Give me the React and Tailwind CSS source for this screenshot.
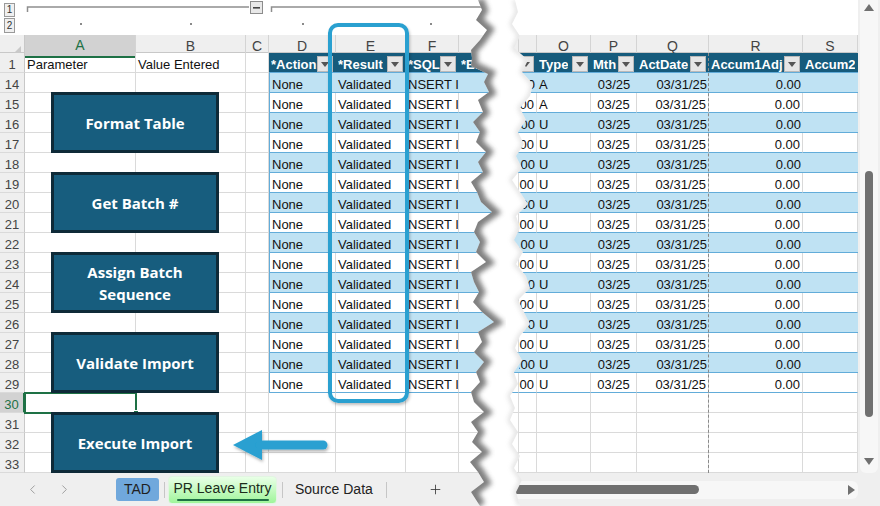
import React from 'react';
import { ChevronLeft, ChevronRight, Plus } from 'lucide-react';

const GRID =
  'grid grid-cols-[25px_111px_110px_23px_67px_70px_53px_60px_18px_54px_46px_72px_94px_55px]';

const letters = ['A', 'B', 'C', 'D', 'E', 'F', '', '', 'O', 'P', 'Q', 'R', 'S'];

const leftEdge = [
  [0, 478], [10, 482], [20, 476], [30, 487], [40, 480], [50, 471], [58, 472], [66, 471], [74, 488],
  [82, 484], [92, 489], [100, 478], [112, 483], [122, 473], [132, 480], [142, 476], [152, 486],
  [162, 478], [172, 483], [182, 471], [192, 477], [202, 481], [212, 492], [222, 478], [232, 474],
  [242, 480], [252, 476], [262, 486], [272, 471], [282, 474], [292, 479], [302, 473], [312, 482],
  [322, 494], [332, 478], [342, 482], [352, 474], [362, 484], [372, 476], [382, 480], [392, 471],
  [402, 474], [412, 484], [422, 471], [432, 478], [442, 472], [452, 482], [462, 470], [472, 478],
  [482, 484], [492, 471], [506, 480],
];

const rightEdge = [
  [0, 515], [12, 518], [24, 512], [36, 520], [48, 514], [60, 528], [72, 522], [84, 533], [96, 530],
  [108, 520], [120, 526], [132, 518], [144, 524], [156, 516], [168, 522], [180, 512], [192, 520],
  [204, 528], [216, 516], [228, 520], [240, 514], [252, 523], [264, 516], [276, 526], [288, 530],
  [300, 518], [312, 524], [324, 530], [336, 520], [348, 515], [360, 522], [372, 514], [384, 518],
  [396, 510], [408, 515], [420, 510], [432, 518], [444, 512], [456, 520], [468, 514], [480, 522],
  [492, 516], [506, 520],
];

const OFF = 450;

function Tear() {
  const l = leftEdge.map(([y, x]) => `${x - OFF},${y}`);
  const r = [...rightEdge].reverse().map(([y, x]) => `${x - OFF},${y}`);
  const gap = `M${l.join(' L')} L${r.join(' L')} Z`;
  const lineL = `M${l.join(' L')}`;
  const lineR = `M${rightEdge.map(([y, x]) => `${x - OFF},${y}`).join(' L')}`;
  return (
    <svg className="absolute left-[450px] top-0 pointer-events-none" width="100" height="506">
      <defs>
        <clipPath id="gapClip">
          <path d={gap} />
        </clipPath>
        <filter id="blurA" x="-50%" y="-10%" width="200%" height="120%">
          <feGaussianBlur stdDeviation="2.4" />
        </filter>
      </defs>
      <path d={gap} fill="#fff" />
      <g clipPath="url(#gapClip)">
        <path d={lineL} stroke="#6a6a6a" strokeWidth="12" fill="none" filter="url(#blurA)" opacity="0.85" />
        <path d={lineR} stroke="#9a9a9a" strokeWidth="4" fill="none" filter="url(#blurA)" opacity="0.35" />
      </g>
    </svg>
  );
}

function Drop() {
  return (
    <span className="w-[16px] h-[16px] shrink-0 bg-[#e6e6e6] border border-[#b9b9b9] flex items-center justify-center">
      <svg width="8" height="5" viewBox="0 0 8 5">
        <polygon points="0,0 8,0 4,5" fill="#555" />
      </svg>
    </span>
  );
}

function Head({ label, drop = true, end }) {
  return (
    <div
      className={`flex items-end ${end ? 'justify-end' : 'justify-between'} bg-[#165b7c] text-white font-bold text-[13px] leading-[15px] pl-[2px] pr-[3px] overflow-hidden whitespace-nowrap border-b border-[#62acd9]`}
    >
      {label && <span className="overflow-hidden">{label}</span>}
      {drop && <Drop />}
    </div>
  );
}

function RowNum({ n, active }) {
  return (
    <div
      className={`flex items-end justify-center text-[13px] leading-[15px] border-b border-b-[#dadada] ${
        active
          ? 'bg-[#d2d2d2] text-[#1e7145] border-r-2 border-r-[#1e7145]'
          : 'bg-[#efefef] text-[#444] border-r border-r-[#c8c8c8]'
      }`}
    >
      {n}
    </div>
  );
}

function Plain({ children }) {
  return (
    <div className="flex items-end px-[2px] text-[13px] leading-[15px] text-[#111] border-r border-b border-[#dadada] overflow-hidden whitespace-nowrap">
      {children}
    </div>
  );
}

function TCell({ blue, children, align = 'left', first }) {
  const a = align === 'right' ? 'justify-end' : align === 'center' ? 'justify-center' : 'justify-start';
  return (
    <div
      className={`flex items-end ${a} px-[2px] text-[13px] leading-[15px] text-[#111] overflow-hidden whitespace-nowrap border-b border-b-[#62acd9] ${
        blue ? 'bg-[#bfe2f3]' : 'bg-white border-r border-r-[#d9d9d9]'
      } ${first ? 'border-l border-l-[#62acd9]' : ''}`}
    >
      {children}
    </div>
  );
}

const dataRows = Array.from({ length: 16 }, (_, i) => 14 + i);

const buttons = [
  { top: 'top-[92px]', label: ['Format Table'] },
  { top: 'top-[172px]', label: ['Get Batch #'] },
  { top: 'top-[252px]', label: ['Assign Batch', 'Sequence'] },
  { top: 'top-[332px]', label: ['Validate Import'] },
  { top: 'top-[412px]', label: ['Execute Import'] },
];

export default function App() {
  return (
    <div className="relative w-[880px] h-[506px] overflow-hidden bg-white font-['Liberation_Sans',Arial,sans-serif]">
      <div className="flex h-[473px]">
        <div className="w-[858px] flex flex-col">
          {/* outline bar */}
          <div className="flex h-[35px]">
            <div className="w-[25px] flex flex-col gap-[1px] pl-[4px] pt-[3px]">
              <div className="w-[11px] h-[14px] border border-[#9a9a9a] bg-[#f0f0f0] text-[10px] leading-[12px] text-[#333] text-center">1</div>
              <div className="w-[11px] h-[15px] border border-[#9a9a9a] bg-[#f0f0f0] text-[10px] leading-[13px] text-[#333] text-center">2</div>
            </div>
            <svg width="833" height="35">
              <path d="M2.5 12 V7 H224" stroke="#8e8e8e" strokeWidth="1.5" fill="none" />
              <rect x="225.5" y="1.5" width="12" height="12" fill="#e8e8e8" stroke="#8c8c8c" />
              <rect x="228" y="7" width="7" height="1.6" fill="#444" />
              <path d="M246.5 12 V7 H470" stroke="#8e8e8e" strokeWidth="1.5" fill="none" />
              <rect x="55" y="23" width="2" height="2" fill="#8a8a8a" />
              <rect x="165" y="23" width="2" height="2" fill="#8a8a8a" />
              <rect x="277" y="23" width="2" height="2" fill="#8a8a8a" />
              <rect x="405" y="23" width="2" height="2" fill="#8a8a8a" />
            </svg>
          </div>

          {/* column letters */}
          <div className={`${GRID} h-[18px] bg-[#efefef] border-b border-[#c8c8c8]`}>
            <div className="flex items-end justify-end pr-[3px] pb-[3px] border-r border-[#c8c8c8]">
              <svg width="9" height="9">
                <polygon points="9,0 9,9 0,9" fill="#c9c9c9" />
              </svg>
            </div>
            {letters.map((l, i) => (
              <div
                key={i}
                className={`flex items-center justify-center text-[14px] border-r border-r-[#d4d4d4] ${
                  i === 0 ? 'bg-[#d2d2d2] text-[#1e7145] border-b-2 border-b-[#1e7145]' : 'text-[#444]'
                }`}
              >
                {l}
              </div>
            ))}
          </div>

          {/* row 1 */}
          <div className={`${GRID} h-[20px]`}>
            <RowNum n={1} />
            <Plain>Parameter</Plain>
            <Plain>Value Entered</Plain>
            <Plain />
            <Head label="*Action" />
            <Head label="*Result" />
            <Head label="*SQL" />
            <Head label="*EffDate" />
            <Head end />
            <Head label="Type" />
            <Head label="Mth" />
            <Head label="ActDate" />
            <Head label="Accum1Adj" />
            <Head label="Accum2Adj" drop={false} />
          </div>

          {/* table rows */}
          {dataRows.map((r) => {
            const blue = r % 2 === 0;
            return (
              <div key={r} className={`${GRID} h-[20px]`}>
                <RowNum n={r} />
                <Plain />
                <Plain />
                <Plain />
                <TCell blue={blue} first>None</TCell>
                <TCell blue={blue}>Validated</TCell>
                <TCell blue={blue}>NSERT I</TCell>
                <TCell blue={blue} />
                <TCell blue={blue} align="right">.00</TCell>
                <TCell blue={blue}>{r < 16 ? 'A' : 'U'}</TCell>
                <TCell blue={blue} align="center">03/25</TCell>
                <TCell blue={blue} align="right">03/31/25</TCell>
                <TCell blue={blue} align="right">0.00</TCell>
                <TCell blue={blue} />
              </div>
            );
          })}

          {[30, 31, 32, 33].map((r) => (
            <div key={r} className={`${GRID} h-[20px]`}>
              <RowNum n={r} active={r === 30} />
              {Array.from({ length: 13 }, (_, i) => (
                <Plain key={i} />
              ))}
            </div>
          ))}
        </div>

        {/* vertical scrollbar */}
        <div className="w-[22px] h-[473px] bg-[#efefef] pl-[2px] pr-[2px]">
          <div className="h-full rounded-b-[6px] bg-[#f7f7f7] flex flex-col items-center">
            <svg className="mt-[4px]" width="10" height="7" viewBox="0 0 10 7">
              <polygon points="5,0 10,7 0,7" fill="#707070" />
            </svg>
            <div className="mt-[160px] w-[8px] h-[246px] rounded-full bg-[#707070]" />
            <svg className="mt-[41px]" width="10" height="7" viewBox="0 0 10 7">
              <polygon points="0,0 10,0 5,7" fill="#707070" />
            </svg>
          </div>
        </div>
      </div>

      {/* sheet tabs */}
      <div className="flex items-center h-[33px] bg-[#efefef]">
        <ChevronLeft className="ml-[25px]" size={15} color="#9a9a9a" strokeWidth={1.5} />
        <ChevronRight className="ml-[17px]" size={15} color="#9a9a9a" strokeWidth={1.5} />
        <div className="ml-[44px] w-[43px] h-[23px] rounded-[3px] bg-[#70a8dc] text-[14px] text-[#1f1f1f] flex items-center justify-center">
          TAD
        </div>
        <div className="ml-[5px] w-px h-[16px] bg-[#c6c6c6]" />
        <div className="ml-[3px] w-[109px] h-[28px] rounded-[4px] border border-[#e2f5e2] bg-gradient-to-b from-[#e8ffe6] to-[#9ff59a] flex flex-col items-center justify-center">
          <span className="text-[14px] text-[#1b2b1b] font-medium leading-[16px] mt-[2px]">PR Leave Entry</span>
          <span className="mt-[3px] w-[92px] h-[2px] bg-[#1e7145] rounded" />
        </div>
        <div className="ml-[5px] w-px h-[16px] bg-[#c6c6c6]" />
        <span className="ml-[12px] text-[14px] text-[#222]">Source Data</span>
        <div className="ml-[13px] w-px h-[16px] bg-[#c6c6c6]" />
        <Plus className="ml-[41px]" size={15} color="#333" strokeWidth={1.3} />
        <div className="ml-[52px] flex-1 h-[18px] mr-[22px] rounded-[6px] bg-[#f7f7f7] flex items-center">
          <div className="ml-[4px] w-[200px] h-[9px] rounded-full bg-[#707070]" />
          <svg className="ml-auto mr-[3px]" width="7" height="10" viewBox="0 0 7 10">
            <polygon points="0,0 7,5 0,10" fill="#707070" />
          </svg>
        </div>
      </div>

      {/* page break */}
      <div className="absolute left-[708px] top-[53px] h-[420px] border-l border-dashed border-[#8a8a8a]" />

      {/* selected cell A30 */}
      <div className="absolute left-[24px] top-[392px] w-[113px] h-[22px] border-2 border-[#1e7145]">
        <div className="absolute right-[-4px] bottom-[-4px] w-[6px] h-[6px] bg-[#1e7145] border border-white" />
      </div>

      {/* macro buttons */}
      {buttons.map((b) => (
        <div
          key={b.label[0]}
          className={`absolute left-[51px] ${b.top} w-[168px] h-[61px] bg-[#175d7e] border-[3px] border-[#0e2a38] flex flex-col items-center justify-center text-white font-['Open_Sans',sans-serif] font-bold text-[15px] leading-[22px]`}
        >
          {b.label.map((t) => (
            <span key={t}>{t}</span>
          ))}
        </div>
      ))}

      {/* highlight frame */}
      <div className="absolute left-[328px] top-[23px] w-[81px] h-[380px] rounded-[10px] border-4 border-[#2aa0d0] shadow-[1px_2px_3px_rgba(0,0,0,0.25)]" />

      {/* arrow */}
      <svg className="absolute left-[228px] top-[426px]" width="106" height="40">
        <defs>
          <filter id="arrowShadow" x="-20%" y="-30%" width="140%" height="160%">
            <feDropShadow dx="1" dy="2" stdDeviation="1.5" floodColor="#000" floodOpacity="0.3" />
          </filter>
        </defs>
        <g filter="url(#arrowShadow)">
          <polygon points="5,19 34,4 34,34" fill="#29a0d1" />
          <line x1="32" y1="19" x2="95" y2="19" stroke="#29a0d1" strokeWidth="9" strokeLinecap="round" />
        </g>
      </svg>

      <Tear />
    </div>
  );
}
